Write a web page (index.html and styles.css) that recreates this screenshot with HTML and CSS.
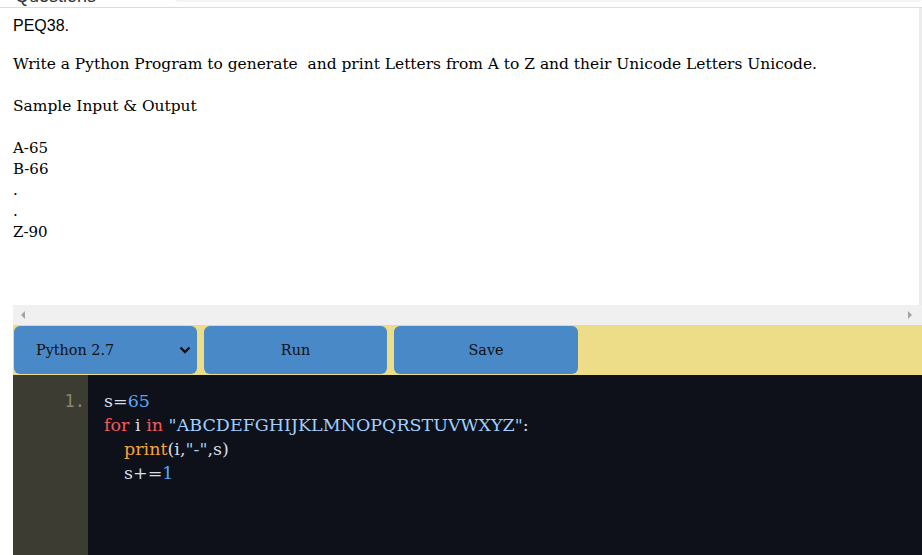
FILE: index.html
```html
<!DOCTYPE html>
<html>
<head>
<meta charset="utf-8">
<link rel="stylesheet" href="styles.css">
</head>
<body>
<div class="topbar">
  <span class="cut-title">Questions</span>
  <span class="top-strip"></span>
</div>
<div class="main">
  <div class="qbox">
    <div class="qcontent">
      <p class="qid">PEQ38.</p>
      <p class="qtext">Write a Python Program to generate &nbsp;and print Letters from A to Z and their Unicode Letters Unicode.</p>
      <p class="qtext">Sample Input &amp; Output</p>
      <div class="sample">
        <div>A-65</div>
        <div>B-66</div>
        <div>.</div>
        <div>.</div>
        <div>Z-90</div>
      </div>
    </div>
    <div class="vtrack"></div>
  </div>
  <div class="hscroll">
    <span class="arrow-left"></span>
    <span class="arrow-right"></span>
  </div>
  <div class="toolbar">
    <div class="btn select-btn">
      <span>Python 2.7</span>
      <svg class="chev" width="12" height="8" viewBox="0 0 12 8"><path d="M1.5 1.5 L6 6 L10.5 1.5" fill="none" stroke="#111" stroke-width="2.4"/></svg>
    </div>
    <div class="btn">Run</div>
    <div class="btn save">Save</div>
  </div>
  <div class="editor">
    <div class="gutter"><div class="lineno">1.</div></div>
    <div class="code">
      <div class="ln"><span class="v">s=</span><span class="n">65</span></div>
      <div class="ln"><span class="k">for</span> <span class="v">i</span> <span class="k">in</span> <span class="s">"ABCDEFGHIJKLMNOPQRSTUVWXYZ"</span><span class="v">:</span></div>
      <div class="ln ind"><span class="f">print</span><span class="v">(i,</span><span class="s">"-"</span><span class="v">,s)</span></div>
      <div class="ln ind"><span class="v">s+=</span><span class="n">1</span></div>
    </div>
  </div>
</div>
</body>
</html>
```

FILE: styles.css
```css
* { box-sizing: border-box; }
html, body { margin: 0; padding: 0; background: #fff; overflow: hidden; }
body { width: 922px; height: 555px; font-family: "DejaVu Serif", serif; }

.topbar {
  height: 8px;
  border-bottom: 1px solid #dcdcdc;
  position: relative;
  overflow: hidden;
}
.cut-title {
  position: absolute;
  left: 15px;
  top: -14px;
  font-family: "Liberation Sans", sans-serif;
  font-size: 18px;
  color: #333;
}
.top-strip {
  position: absolute;
  left: 175px;
  right: 0;
  top: -6px;
  height: 8px;
  background: #f3f3f3;
  border-radius: 4px;
}

.main { padding-left: 13px; }

.qbox {
  height: 297px;
  display: flex;
  background: #fff;
}
.qcontent { flex: 1; padding-top: 1px; }
.vtrack { width: 3px; background: #ececec; }

.qid {
  margin: 0;
  height: 45px;
  padding-top: 8px;
  font-family: "Liberation Sans", sans-serif;
  font-size: 16px;
  color: #000;
}
.qtext {
  margin: 0 0 21px 0;
  font-size: 15.45px;
  line-height: 21px;
  color: #000;
}
.sample {
  font-size: 15px;
  line-height: 21px;
  color: #000;
}

.hscroll {
  height: 20px;
  background: #f0f0f0;
  position: relative;
}
.arrow-left {
  position: absolute;
  left: 8px; top: 6px;
  width: 0; height: 0;
  border-top: 4px solid transparent;
  border-bottom: 4px solid transparent;
  border-right: 4px solid #a3a3a3;
}
.arrow-right {
  position: absolute;
  right: 10px; top: 6px;
  width: 0; height: 0;
  border-top: 4px solid transparent;
  border-bottom: 4px solid transparent;
  border-left: 4px solid #a3a3a3;
}

.toolbar {
  height: 50px;
  background: #eedd88;
  border-top: 1px solid #d6d6d6;
  display: flex;
  gap: 7px;
  padding: 0 0 1px 1px;
}
.btn {
  width: 183px;
  height: 48px;
  background: #4a89c8;
  border-radius: 6px;
  display: flex;
  align-items: center;
  justify-content: center;
  font-size: 14.4px;
  color: #111;
}
.save { width: 184px; }
.select-btn {
  justify-content: space-between;
  padding: 0 6px 0 22px;
}
.chev { display: block; }

.editor {
  height: 180px;
  background: #0e1119;
  display: flex;
}
.gutter {
  width: 75px;
  background: #3d3c32;
  padding-top: 14px;
  text-align: right;
  padding-right: 3px;
}
.lineno {
  color: #8a866c;
  font-family: "DejaVu Sans Mono", monospace;
  font-size: 17px;
  line-height: 24px;
}
.code {
  padding: 14px 0 0 16px;
  font-size: 17.5px;
  line-height: 24px;
  color: #d8dde6;
}
.ln { white-space: pre; }
.ind { padding-left: 20px; }
.v { color: #d8dde6; }
.n { color: #5aa9f5; }
.k { color: #f25a5a; }
.s { color: #9fd0ff; }
.f { color: #f7a33e; }
```
